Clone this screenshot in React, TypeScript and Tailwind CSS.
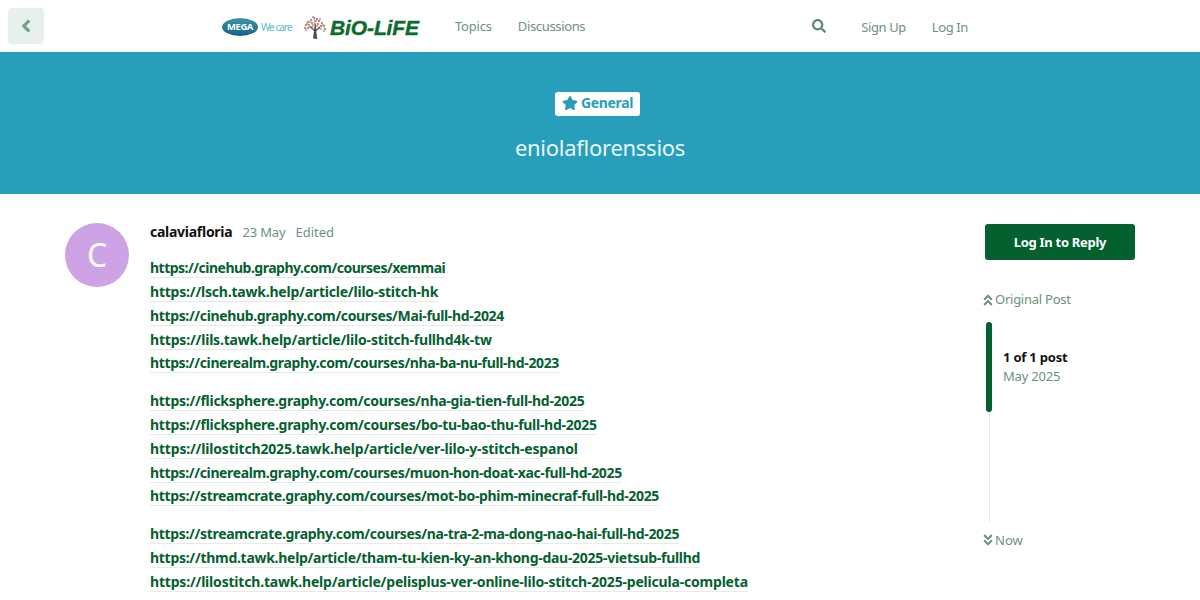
import { FaAngleLeft, FaAngleDoubleUp, FaAngleDoubleDown, FaSearch, FaStar } from "react-icons/fa";

const groups: { u: string; t: string }[][] = [
  [
    { u: "https://cinehub.graphy.com/courses/xemmai", t: "tracking-[-0.51px]" },
    { u: "https://lsch.tawk.help/article/lilo-stitch-hk", t: "tracking-[-0.21px]" },
    { u: "https://cinehub.graphy.com/courses/Mai-full-hd-2024", t: "tracking-[-0.357px]" },
    { u: "https://lils.tawk.help/article/lilo-stitch-fullhd4k-tw", t: "tracking-[-0.19px]" },
    { u: "https://cinerealm.graphy.com/courses/nha-ba-nu-full-hd-2023", t: "tracking-[-0.37px]" },
  ],
  [
    { u: "https://flicksphere.graphy.com/courses/nha-gia-tien-full-hd-2025", t: "tracking-[-0.28px]" },
    { u: "https://flicksphere.graphy.com/courses/bo-tu-bao-thu-full-hd-2025", t: "tracking-[-0.27px]" },
    { u: "https://lilostitch2025.tawk.help/article/ver-lilo-y-stitch-espanol", t: "tracking-[-0.18px]" },
    { u: "https://cinerealm.graphy.com/courses/muon-hon-doat-xac-full-hd-2025", t: "tracking-[-0.37px]" },
    { u: "https://streamcrate.graphy.com/courses/mot-bo-phim-minecraf-full-hd-2025", t: "tracking-[-0.34px]" },
  ],
  [
    { u: "https://streamcrate.graphy.com/courses/na-tra-2-ma-dong-nao-hai-full-hd-2025", t: "tracking-[-0.33px]" },
    { u: "https://thmd.tawk.help/article/tham-tu-kien-ky-an-khong-dau-2025-vietsub-fullhd", t: "tracking-[-0.284px]" },
    { u: "https://lilostitch.tawk.help/article/pelisplus-ver-online-lilo-stitch-2025-pelicula-completa", t: "tracking-[-0.194px]" },
    { u: "https://lilostitch.tawk.help/article/ver-lilo-stitch-2025-pelicula-completa-online-gratis-en-espanol-latino-hd", t: "tracking-[-0.25px]" },
  ],
];

const crownPink = [
  [11, 3], [14, 4], [8, 5], [16, 6], [5, 7], [12, 6], [19, 8], [9, 8], [3, 10], [15, 9], [6, 10], [21, 11], [12, 9], [18, 11], [2, 13], [9, 12], [16, 13], [22, 14], [5, 13],
];
const crownGreen = [
  [10, 2], [13, 6], [7, 7], [17, 4], [4, 9], [10, 10], [20, 10], [14, 11], [7, 12], [18, 14], [3, 15], [21, 16], [12, 13],
];

function Logo() {
  return (
    <div className="flex items-center w-[198px] h-[24px] mt-[2px]">
      <div className="ml-[1px] w-[36px] h-[18px] rounded-[50%] bg-gradient-to-b from-[#3f93ac] to-[#12657f] flex items-center justify-center text-white text-[9.5px] font-bold tracking-[-0.4px] leading-none">
        MEGA
      </div>
      <span className="ml-[3px] text-[10px] tracking-[-0.95px] text-[#5ab9ca] w-[30px] whitespace-nowrap">We care</span>
      <svg width="24" height="24" viewBox="0 0 24 24" className="ml-[12px] shrink-0">
        <g fill="#c98a86">
          {crownPink.map(([x, y], i) => (
            <circle key={i} cx={x} cy={y} r="1.25" />
          ))}
        </g>
        <g fill="#8aa58c">
          {crownGreen.map(([x, y], i) => (
            <circle key={i} cx={x} cy={y} r="0.9" />
          ))}
        </g>
        <path d="M10 23.5l1-7.5-4.5-4 .6-.5 4.2 3 .4-5h1.2l.2 5 3.8-3 .6.5-4.2 4.3.9 7.7z" fill="#5d4a3c" />
      </svg>
      <span className="ml-[3px] whitespace-nowrap font-['Liberation_Sans',sans-serif] italic font-bold text-[21px] leading-none text-[#0d6b2d] [-webkit-text-stroke:0.4px_#0d6b2d] tracking-[-0.1px]">
        BiO-LiFE
      </span>
    </div>
  );
}

export default function App() {
  return (
    <div className="h-[600px] overflow-hidden bg-white font-['Noto_Sans',sans-serif] text-[13px] text-[#6d9080]">
      <header className="h-[52px] flex items-center relative">
        <button className="absolute left-[8px] top-[8px] w-[36px] h-[36px] rounded-[4px] bg-[#e8f0ec] flex items-center justify-center text-[#74a08c]">
          <FaAngleLeft size={20} />
        </button>
        <div className="flex items-center w-full pl-[221px]">
          <Logo />
          <nav className="flex items-center ml-[36px] mt-[1px]">
            <span className="tracking-[-0.2px]">Topics</span>
            <span className="ml-[26px] tracking-[-0.35px]">Discussions</span>
          </nav>
          <FaSearch size={14} className="ml-[227px] -mt-[1px] text-[#5f8a72]" />
          <span className="ml-[35px] mt-[3px] tracking-[-0.4px]">Sign Up</span>
          <span className="ml-[26px] mt-[3px] tracking-[-0.4px]">Log In</span>
        </div>
      </header>

      <section className="h-[142px] bg-[#279eba] flex flex-col items-center pt-[40px]">
        <div className="h-[24px] -ml-[5px] px-[7px] rounded-[3px] bg-white flex items-center gap-[3px] text-[#279eba] font-bold text-[14px]">
          <FaStar size={16} className="-mt-[2px]" />
          <span className="tracking-[-0.35px] -mt-[3px]">General</span>
        </div>
        <h1 className="mt-[17px] text-[22px] leading-[28px] text-[#e9f6f9] tracking-[-0.27px]">eniolaflorenssios</h1>
      </section>

      <main className="flex pt-[29px] pl-[65px]">
        <div className="w-[64px] h-[64px] rounded-full bg-[#cda3e6] text-white text-[32px] flex items-center justify-center shrink-0">
          C
        </div>
        <article className="ml-[21px] w-[770px]">
          <div className="flex items-center h-[18px] whitespace-nowrap">
            <span className="font-bold text-[14px] text-[#111] tracking-[-0.27px] -mt-[1px]">calaviafloria</span>
            <span className="ml-[10px] mt-[1px] tracking-[-0.15px]">23 May</span>
            <span className="ml-[10px] mt-[1px]">Edited</span>
          </div>
          <div className="mt-[15.3px] flex flex-col gap-[14px]">
            {groups.map((g, i) => (
              <div key={i} className="flex flex-col">
                {g.map(({ u, t }) => (
                  <div key={u} className="h-[23.8px] leading-[23.8px] whitespace-nowrap">
                    <a className={`font-bold text-[14px] text-[#04602f] border-b border-[#e4ece8] ${t}`}>{u}</a>
                  </div>
                ))}
              </div>
            ))}
          </div>
        </article>
        <aside className="ml-[65px] w-[150px] flex flex-col items-stretch">
          <button className="h-[36px] mt-[1px] pt-[1px] rounded-[3px] bg-[#04602f] text-white font-bold text-[13px] tracking-[-0.3px]">Log In to Reply</button>
          <div className="mt-[30px] flex items-center -ml-[4px]">
            <FaAngleDoubleUp size={14} />
            <span className="tracking-[-0.25px]">Original Post</span>
          </div>
          <div className="mt-[12px] h-[200px] flex">
            <div className="relative w-[6px] ml-[1px] flex justify-center">
              <div className="w-[1px] h-full bg-[#e6e6e6]" />
              <div className="absolute left-0 top-0 w-[6px] h-[90px] rounded-[3px] bg-[#04602f]" />
            </div>
            <div className="ml-[11px] pt-[26px]">
              <div className="font-bold text-[13px] text-[#111] leading-[19px] tracking-[-0.2px]">1 of 1 post</div>
              <div className="leading-[19px] tracking-[-0.2px]">May 2025</div>
            </div>
          </div>
          <div className="mt-[9px] flex items-center -ml-[4px]">
            <FaAngleDoubleDown size={14} />
            <span>Now</span>
          </div>
        </aside>
      </main>
    </div>
  );
}
